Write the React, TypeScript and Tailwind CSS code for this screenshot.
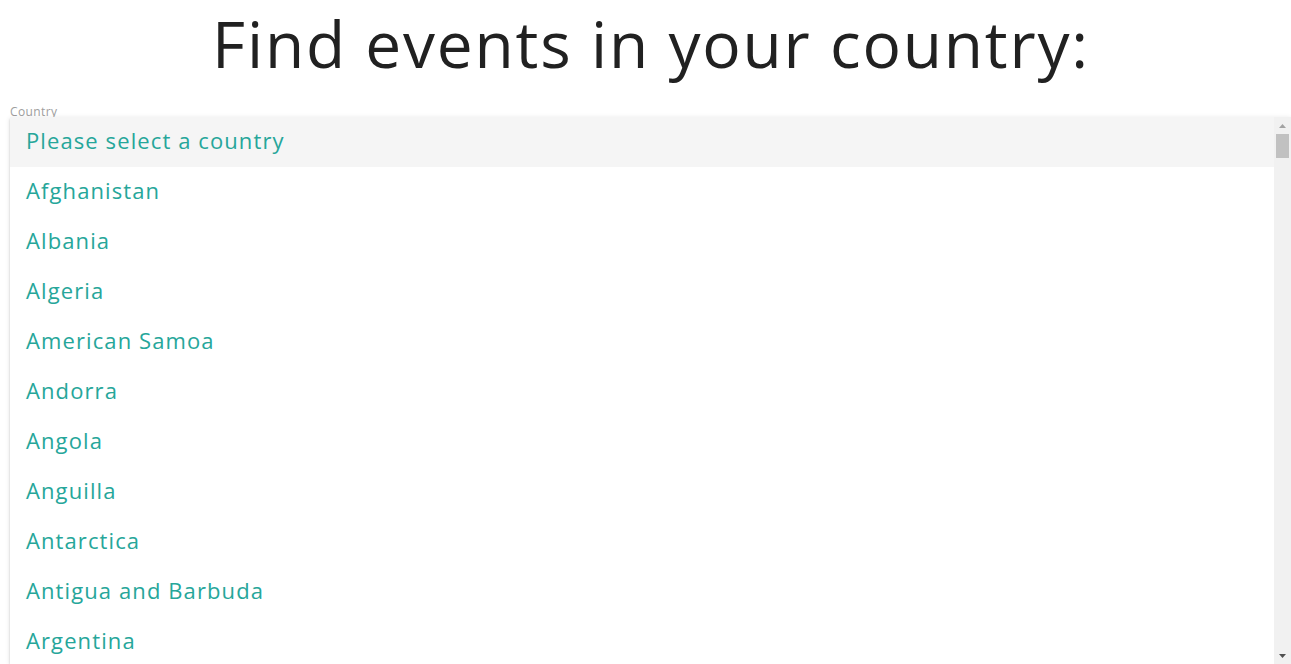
const countries = [
  "Afghanistan",
  "Albania",
  "Algeria",
  "American Samoa",
  "Andorra",
  "Angola",
  "Anguilla",
  "Antarctica",
  "Antigua and Barbuda",
  "Argentina",
];

const font = { fontFamily: '"Open Sans", "Noto Sans", sans-serif' };

export default function App() {
  return (
    <div className="h-[664px] overflow-hidden bg-white" style={font}>
      <h1 className="pl-[11px] text-center text-[64px] leading-[88px] font-normal tracking-[1.8px] text-[#212121]">
        Find events in your country:
      </h1>

      <div className="pl-[10px]">
        <p className="h-[29px] pt-[16px] text-[12px] leading-[15px] tracking-[0.4px] text-[#9e9e9e]">Country</p>

        <div className="relative flex h-[547px] overflow-hidden bg-white shadow-[0_2px_2px_0_rgba(0,0,0,0.14),0_1px_5px_0_rgba(0,0,0,0.12)]">
          <ul className="flex-1">
            <li className="flex h-[50px] items-center bg-[#f5f5f5] px-4 pb-1 text-[22px] tracking-[1.1px] text-[#26a69a]">
              Please select a country
            </li>
            {countries.map((c) => (
              <li key={c} className="flex h-[50px] items-center px-4 pb-1 text-[22px] tracking-[1.1px] text-[#26a69a]">
                {c}
              </li>
            ))}
          </ul>

          {/* fake scrollbar */}
          <div className="flex w-[17px] flex-col bg-[#f1f1f1]">
            <div className="flex h-[17px] items-center justify-center">
              <svg width="7" height="4" viewBox="0 0 7 4">
                <path d="M0 4 L3.5 0 L7 4 Z" fill="#a3a3a3" />
              </svg>
            </div>
            <div className="mx-[2px] h-[24px] bg-[#c1c1c1]" />
            <div className="flex-1" />
            <div className="flex h-[17px] items-center justify-center">
              <svg width="7" height="4" viewBox="0 0 7 4">
                <path d="M0 0 L7 0 L3.5 4 Z" fill="#505050" />
              </svg>
            </div>
          </div>
        </div>
      </div>
    </div>
  );
}
